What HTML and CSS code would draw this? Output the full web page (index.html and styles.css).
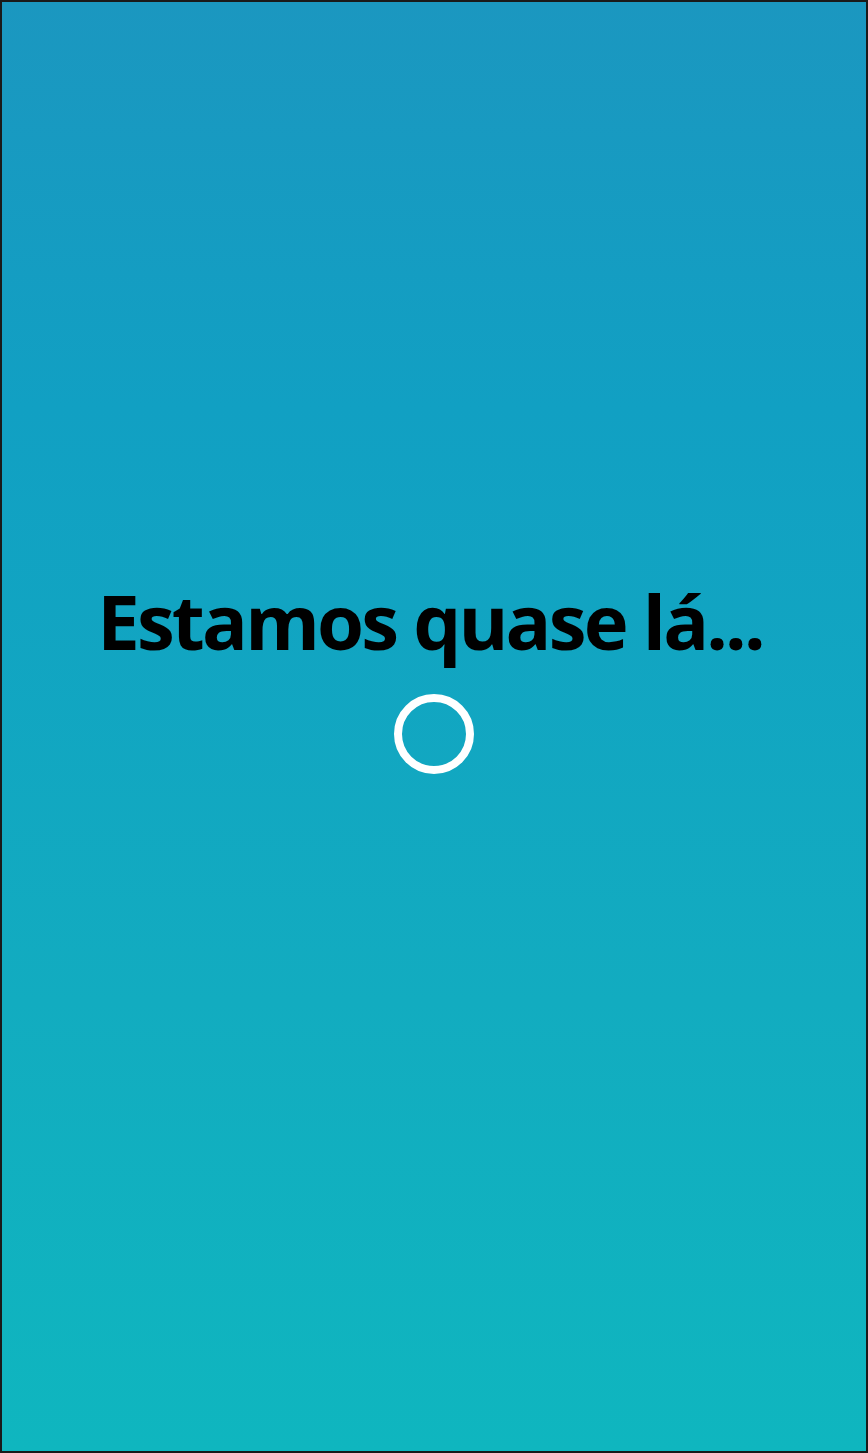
FILE: index.html
```html
<!DOCTYPE html>
<html lang="pt">
<head>
<meta charset="utf-8">
<title>Estamos quase lá...</title>
<link rel="stylesheet" href="styles.css">
</head>
<body>
<main class="screen">
  <div class="loader">
    <h1 class="title">Estamos quase lá...</h1>
    <div class="spinner"></div>
  </div>
</main>
</body>
</html>
```

FILE: styles.css
```css
html, body {
  margin: 0;
  padding: 0;
}
body {
  width: 868px;
  height: 1453px;
}
.screen {
  box-sizing: border-box;
  width: 868px;
  height: 1453px;
  border: 2px solid #1a1a1a;
  background: linear-gradient(to bottom, #1b97c0 0%, #11a0c3 28%, #12acc0 69%, #0fb6bf 100%);
  display: flex;
  justify-content: center;
  padding-top: 574px;
}
.loader {
  display: flex;
  flex-direction: column;
  align-items: center;
}
.title {
  margin: 0;
  padding-right: 8px;
  font-family: "Open Sans", sans-serif;
  font-weight: 700;
  font-size: 76px;
  line-height: 90px;
  letter-spacing: -2.8px;
  color: #000;
}
.spinner {
  box-sizing: border-box;
  width: 80px;
  height: 80px;
  margin-top: 28px;
  border: 8px solid #fff;
  border-radius: 50%;
}
```
